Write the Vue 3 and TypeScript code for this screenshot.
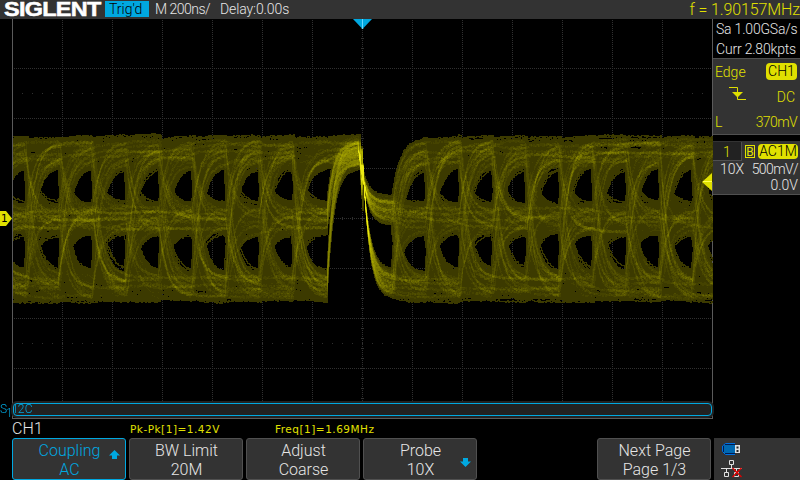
<script setup lang="ts">
import { onMounted, ref } from 'vue'

interface MenuItem {
  title: string
  value: string
  active?: boolean
  arrow?: 'up' | 'down'
  last?: boolean
}

const menu: MenuItem[] = [
  { title: 'Coupling', value: 'AC', active: true, arrow: 'up' },
  { title: 'BW Limit', value: '20M' },
  { title: 'Adjust', value: 'Coarse' },
  { title: 'Probe', value: '10X', arrow: 'down' },
  { title: 'Next Page', value: 'Page 1/3', last: true },
]

const columns = Array.from({ length: 13 }, (_, i) => 50 * (i + 1))
const rows = Array.from({ length: 7 }, (_, i) => 50 * (i + 1))

const scope = ref<HTMLCanvasElement | null>(null)

// Plot geometry
const W = 700
const H = 400
const TRIGGER = 347
const CROSS_X = 350
const CROSS_Y = 163
const PERIOD = 33.35
const LEVELS = [132, 199, 267]

function makeRandom(seed: number) {
  let s = seed
  return () => {
    s = (s + 0x6d2b79f5) | 0
    let t = Math.imul(s ^ (s >>> 15), 1 | s)
    t = (t + Math.imul(t ^ (t >>> 7), 61 | t)) ^ t
    return ((t ^ (t >>> 14)) >>> 0) / 4294967296
  }
}

// Persistence display: overlaid three-level traces, all aligned on the trigger edge
function drawPersistence(ctx: CanvasRenderingContext2D) {
  const random = makeRandom(73)
  const density = new Float32Array(W * H)

  const trace = (weight: number, spread: number, thickness: number) => {
    const offset = (random() * 2 - 1) * spread
    const tau = 7.2 + random() * 1.4
    const edgeJitter = random() * 3.6 - 0.8
    let y = LEVELS[Math.floor(random() * 3)] + offset
    let target = y
    let slot = -100
    let last = y
    let fallStart = TRIGGER
    let fallFrom = y
    let fallTarget = y
    let fallTau = 6
    for (let x = -20; x < W; x++) {
      const d = x - TRIGGER
      const current = Math.floor((d + (d > -40 && d < 20 ? 0 : edgeJitter)) / PERIOD)
      if (current !== slot) {
        slot = current
        let level = Math.floor(random() * 3)
        if (slot === -1) level = 0
        target = LEVELS[level] + offset + (random() * 2 - 1) * 3
        if (slot === -1) {
          level = random() < 0.5 ? 1 : 2
          fallTarget = level === 1 ? 191 + offset : 265 + offset
          fallTau = level === 1 ? 6.2 : 6.6
          fallFrom = target
          fallStart = CROSS_X - fallTau * Math.log((fallFrom - fallTarget) / (CROSS_Y - fallTarget))
          fallStart = Math.max(fallStart, CROSS_X - 6)
        }
        if (slot === 0) target = fallTarget
      }
      if (x >= fallStart && (slot === 0 || slot === -1) && d > -10) {
        y = fallTarget + (fallFrom - fallTarget) * Math.exp(-(x - fallStart) / fallTau)
      } else {
        const k = slot === -1 ? 6.6 : tau
        y += (target - y) * (1 - Math.exp(-1 / k))
        if (slot === -1 && x < fallStart) fallFrom = Math.max(target, y)
      }
      const py = y + (random() - 0.5) * 2
      if (x >= 0) {
        const a = Math.round(Math.min(last, py))
        const b = Math.round(Math.max(last, py)) + thickness
        const nearness = Math.exp(-Math.abs(d - 2) / 13)
        const steep = 0.15 - 0.12 * nearness
        const w = (weight * (1 + 0.35 * nearness) * (0.6 + random() * 0.8)) / (1 + (b - a) * steep)
        for (let j = a; j <= b; j++) {
          if (j >= 0 && j < H) density[j * W + x] += w
        }
      }
      last = py
    }
  }

  for (let i = 0; i < 460; i++) trace(0.3, 14.5, 0)
  for (let i = 0; i < 34; i++) trace(3.6, 11, 1)

  const image = ctx.createImageData(W, H)
  for (let i = 0; i < density.length; i++) {
    const v = density[i]
    if (v <= 0) continue
    // Linear for sparse pixels, compressed where many traces coincide
    const raw = Math.max(0, v - 1) * 4.6
    const glow = raw < 70 ? raw : 70 + (raw - 70) * 0.42
    const level = Math.min(236, 60 + Math.floor(glow / 9) * 9)
    image.data[i * 4] = level
    image.data[i * 4 + 1] = level - 2
    image.data[i * 4 + 2] = level > 210 ? 20 : 0
    image.data[i * 4 + 3] = 255
  }
  ctx.putImageData(image, 0, 0)
}

onMounted(() => {
  const ctx = scope.value?.getContext('2d')
  if (ctx) drawPersistence(ctx)
})
</script>

<template>
  <div class="screen">
    <header class="top">
      <div class="logo"><span>SIGLENT</span></div>
      <div class="state">Trig'd</div>
      <div class="timebase">M 200ns/</div>
      <div class="delay">Delay:0.00s</div>
      <div class="freq">f = 1.90157MHz</div>
    </header>

    <main class="body">
      <section class="plot">
        <svg class="grid" width="701" height="399" viewBox="0 19 701 399" shape-rendering="crispEdges">
          <g stroke="#303030" stroke-width="1" stroke-dasharray="1 1">
            <line v-for="x in columns" :key="'c' + x" :x1="x + 0.5" :x2="x + 0.5" y1="20" y2="402" />
            <line v-for="y in rows" :key="'r' + y" x1="2" x2="700" :y1="y + 18.5" :y2="y + 18.5" />
          </g>
          <g stroke="#303030">
            <line x1="350.5" x2="350.5" y1="28" y2="402" stroke-width="3" stroke-dasharray="1 9" />
            <line x1="10" x2="700" y1="218.5" y2="218.5" stroke-width="3" stroke-dasharray="1 9" />
            <line x1="10" x2="700" y1="93.5" y2="93.5" stroke-dasharray="1 9" />
            <line x1="10" x2="700" y1="343.5" y2="343.5" stroke-dasharray="1 9" />
          </g>
        </svg>
        <canvas ref="scope" class="wave" width="700" height="400"></canvas>
        <svg class="trigger-pos" width="19" height="10" viewBox="0 0 19 10">
          <path d="M0 0H19L9.5 10Z" fill="#00a8e0" />
          <path d="M9.5 0V10" stroke="#66d8ff" />
        </svg>
        <svg class="trigger-level" width="10" height="18" viewBox="0 0 10 18">
          <path d="M10 0V18L0 9Z" fill="#e0e000" />
          <path d="M1 8.5H10" stroke="#ffff50" />
        </svg>
        <div class="bus"><span>I2C</span></div>
      </section>

      <aside class="side">
        <div class="sample">
          <div class="sa">Sa 1.00GSa/s</div>
          <div class="curr">Curr 2.80kpts</div>
        </div>
        <div class="trigger">
          <div class="line"><span class="edge">Edge</span><span class="chip ch">CH1</span></div>
          <div class="line">
            <svg class="slope" width="18" height="14" viewBox="0 0 18 14">
              <path d="M0 .5H8.5V12.5H17" fill="none" stroke="#e0e000" />
              <path d="M3 5H14L8.5 10.5Z" fill="#e0e000" />
            </svg>
            <span class="dc">DC</span>
          </div>
          <div class="line"><span>L</span><span class="mv">370mV</span></div>
        </div>
        <div class="channel">
          <div class="head">
            <span class="tab">1</span>
            <span class="bw">B</span>
            <span class="chip ac">AC1M</span>
          </div>
          <div class="scale"><span>10X</span><span class="mv">500mV/</span></div>
          <div class="offset">0.0V</div>
        </div>
      </aside>
    </main>

    <div class="measure">
      <span class="name">CH1</span>
      <span class="pk">Pk-Pk[1]=1.42V</span>
      <span class="fr">Freq[1]=1.69MHz</span>
    </div>

    <footer class="bottom">
      <div
        v-for="item in menu"
        :key="item.title"
        class="key"
        :class="{ active: item.active, last: item.last }"
      >
        <span class="title">{{ item.title }}</span>
        <span class="value">{{ item.value }}</span>
        <svg v-if="item.arrow" class="arrow" :class="item.arrow" width="11" height="9" viewBox="0 0 11 9">
          <path d="M5.5 0L11 5.5H8V9H3V5.5H0Z" fill="#00a8e0" />
        </svg>
      </div>
      <div class="status">
        <svg width="22" height="36" viewBox="0 0 22 36">
          <path d="M14 1.5H4.5L1.5 4V9.5L4.5 12.5H14" fill="#001a50" stroke="#0070e0" />
          <path d="M3 3H14V11H3Z" fill="#0068b0" />
          <path d="M14 3H19V11H14Z" fill="#e0e0e0" />
          <path d="M15.5 4.5h2v2h-2zM15.5 8h2v2h-2z" fill="#222" />
          <g fill="none" stroke="#e0e0e0">
            <path d="M8.5 18.5H12.5V22.5H8.5ZM10.5 23V26.5M0 26.5H21M5.5 27V30M15.5 27V30M3.5 30.5H7.5V34.5H3.5ZM13.5 30.5H17.5V34.5H13.5Z" />
          </g>
          <path d="M11.5 26L20.5 35M20.5 26L11.5 35" stroke="#e00000" stroke-width="1.4" />
        </svg>
      </div>
    </footer>

    <svg class="ch-marker" width="12" height="15" viewBox="0 0 12 15">
      <path d="M0 0H6L12 7.5L6 15H0Z" fill="#e0e000" />
    </svg>
    <span class="ch-number">1</span>
    <span class="bus-s">S</span>
    <span class="bus-n">1</span>
  </div>
</template>

<style>
body {
  background: #000;
}
</style>

<style scoped>
.screen {
  position: relative;
  display: flex;
  flex-direction: column;
  width: 800px;
  height: 480px;
  overflow: hidden;
  background: #000;
  color: #e6e6e6;
  font-family: Roboto, "Liberation Sans", sans-serif;
  font-size: 14px;
  font-weight: 300;
  white-space: nowrap;
}
.top {
  display: flex;
  height: 19px;
  flex: none;
  background: #333;
  line-height: 19px;
}
.logo {
  width: 105px;
  color: #fff;
  font-family: "Liberation Sans", sans-serif;
  font-size: 20px;
  font-weight: 700;
}
.logo span {
  display: inline-block;
  margin-left: 4px;
  letter-spacing: -0.6px;
  transform: scaleX(1.17);
  transform-origin: left;
  -webkit-text-stroke: 0.5px #fff;
}
.state {
  box-sizing: border-box;
  width: 44px;
  height: 16px;
  margin-top: 1px;
  padding-left: 4px;
  background: #00a8e0;
  color: #000;
  line-height: 17px;
}
.timebase {
  width: 65px;
  margin-left: 6px;
  letter-spacing: -0.5px;
}
.delay {
  width: 100px;
  letter-spacing: -0.1px;
}
.freq {
  margin-left: auto;
  color: #e0e000;
  font-size: 16px;
  letter-spacing: -0.1px;
}
.body {
  display: flex;
  height: 400px;
  flex: none;
}
.plot {
  position: relative;
  display: flex;
  align-items: flex-end;
  box-sizing: border-box;
  width: 701px;
  height: 400px;
  margin-left: 12px;
  border: 1px solid #5a5a5a;
  border-top: 0;
}
.grid,
.wave {
  position: absolute;
  left: 0;
  top: 0;
}
.grid {
  left: -1px;
}
.trigger-pos {
  position: absolute;
  left: 340px;
  top: 0;
}
.trigger-level {
  position: absolute;
  right: 0;
  top: 154px;
}
.bus {
  position: relative;
  box-sizing: border-box;
  width: 699px;
  height: 13px;
  margin-bottom: 2px;
  border: 1px solid #00a8e0;
  border-radius: 4px;
  background: #222;
  box-shadow: 0 0 0 2px #222;
  color: #00a8e0;
  font-size: 12px;
  letter-spacing: 0.5px;
  line-height: 10px;
}
.side {
  width: 87px;
}
.sample {
  height: 39px;
  padding-left: 3px;
  border-bottom: 1px solid #505050;
  letter-spacing: -0.2px;
  line-height: 20px;
}
.trigger {
  display: flex;
  flex-direction: column;
  height: 75px;
  padding: 0 3px 0 2px;
  border-bottom: 1px solid #505050;
  background: #333;
  color: #e0e000;
}
.line {
  display: flex;
  align-items: center;
  justify-content: space-between;
  height: 25px;
}
.mv {
  letter-spacing: -0.6px;
}
.chip {
  border-radius: 4px;
  background: #e0e000;
  color: #000;
  text-align: center;
}
.ch {
  width: 31px;
  height: 17px;
  line-height: 17px;
}
.slope {
  margin: -6px 0 0 14px;
}
.dc {
  padding-right: 2px;
}
.channel {
  height: 53px;
  margin-top: 6px;
  border-bottom: 1px solid #505050;
  background: #333;
}
.head {
  display: flex;
  align-items: center;
  height: 20px;
}
.tab {
  width: 28px;
  height: 18px;
  border-right: 1px solid #505050;
  border-bottom: 1px solid #505050;
  background: #222;
  color: #e0e000;
  line-height: 20px;
  text-align: center;
}
.bw {
  width: 8px;
  height: 11px;
  margin-left: 3px;
  border: 1px solid #e0e000;
  color: #e0e000;
  font-size: 12px;
  font-weight: 400;
  line-height: 12px;
  text-align: center;
}
.ac {
  width: 40px;
  height: 15px;
  margin-left: 3px;
  line-height: 15px;
}
.scale {
  display: flex;
  justify-content: space-between;
  padding: 0 2px 0 7px;
  line-height: 17px;
}
.offset {
  padding-right: 2px;
  line-height: 14px;
  text-align: right;
}
.measure {
  display: flex;
  height: 19px;
  flex: none;
  line-height: 20px;
}
.name {
  width: 118px;
  padding-left: 12px;
  font-size: 16px;
  letter-spacing: 0.2px;
}
.pk,
.fr {
  width: 145px;
  color: #e0e000;
  font-family: "DejaVu Sans", sans-serif;
  font-size: 10.5px;
  font-weight: 400;
  letter-spacing: 0.5px;
}
.bottom {
  display: flex;
  gap: 3px;
  height: 42px;
  padding-left: 12px;
}
.key {
  position: relative;
  display: flex;
  flex-direction: column;
  align-items: center;
  box-sizing: border-box;
  width: 114px;
  height: 42px;
  padding: 2px 0 0 1px;
  border: 1px solid #505050;
  border-radius: 3px;
  background: #333;
  font-size: 16px;
  line-height: 19px;
}
.active {
  border-color: #00a8e0;
  color: #00a8e0;
}
.last {
  margin-left: 117px;
}
.arrow {
  position: absolute;
  right: 5px;
}
.up {
  top: 11px;
}
.down {
  top: 19px;
  transform: rotate(180deg);
}
.status {
  width: 86px;
  padding: 4px 0 0 7px;
  box-sizing: border-box;
  background: #333;
}
.ch-marker {
  position: absolute;
  left: 0;
  top: 211px;
}
.ch-number {
  position: absolute;
  left: 1px;
  top: 211px;
  color: #000;
  font-family: "DejaVu Sans", sans-serif;
  font-size: 10.5px;
  font-weight: 400;
  line-height: 15px;
}
.bus-s,
.bus-n {
  position: absolute;
  left: 0;
  top: 403px;
  color: #00a8e0;
  font-size: 12px;
  line-height: 12px;
}
.bus-n {
  left: 6px;
  top: 407px;
}
</style>
